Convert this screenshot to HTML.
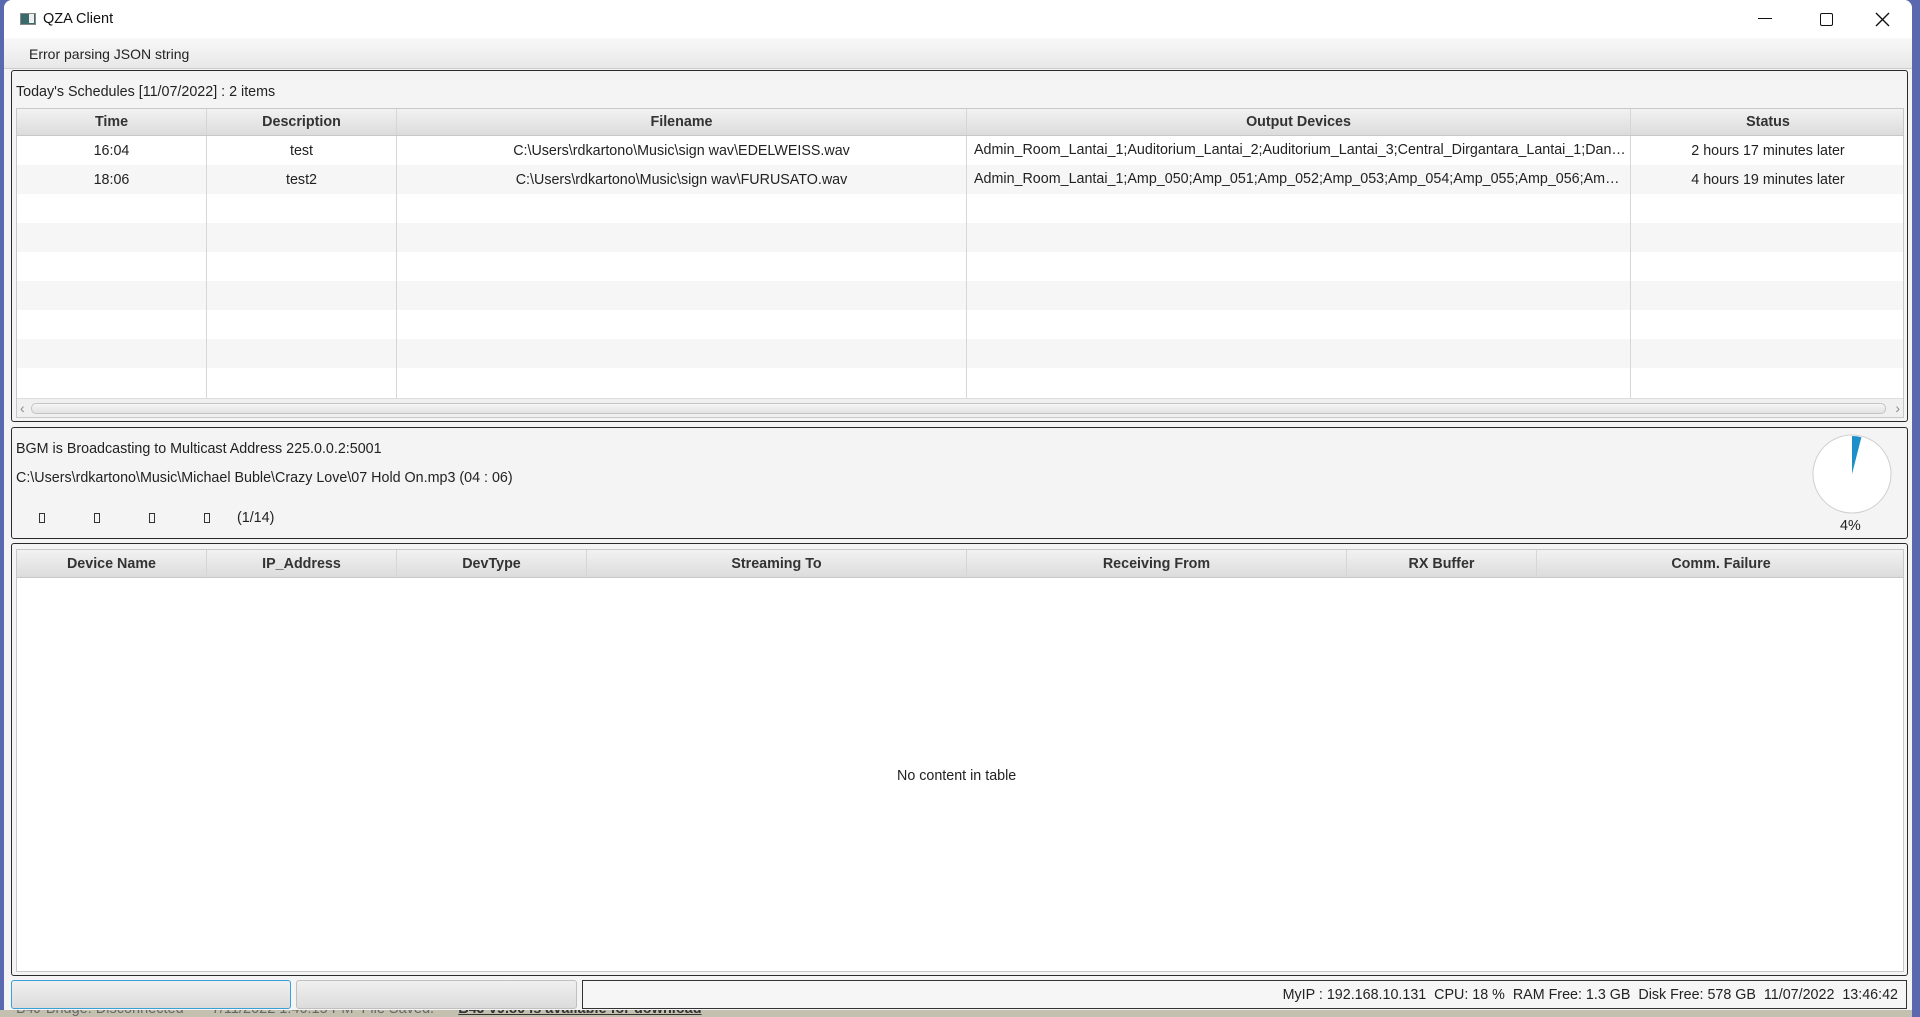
<!DOCTYPE html>
<html><head><meta charset="utf-8"><style>
*{box-sizing:border-box;margin:0;padding:0}
body{width:1920px;height:1017px;overflow:hidden;background:#5a68b0;font-family:"Liberation Sans",sans-serif;font-size:14.3px;color:#222;position:relative}
.abs{position:absolute}
.win{left:4px;top:0;width:1908px;height:1010px;background:#f4f4f4;border-radius:8px 8px 0 0}
.title{left:4px;top:0;width:1908px;height:38px;background:#fff;border-radius:8px 8px 0 0}
.menu{left:4px;top:38px;width:1908px;height:31px;background:linear-gradient(#f8f8f8,#e8e8e8);border-bottom:1px solid #ccc}
.panel{border:1px solid #2a2a2a;border-radius:3px;background:#f4f4f4}
.hdr{background:linear-gradient(#f2f2f2,#dcdcdc);border-bottom:1px solid #c8c8c8;font-weight:bold;color:#333}
.cell{position:absolute;top:0;height:100%;display:flex;align-items:center;justify-content:center;border-right:1px solid #d6d6d6;white-space:nowrap;overflow:hidden}
.ell{display:block;line-height:29px;text-overflow:ellipsis;padding-left:7px;padding-right:4px}
.row{position:absolute;left:0;width:100%;height:29px}
.t{position:absolute;white-space:nowrap}
</style></head><body>
<div class="abs win"></div>
<div class="abs title">
 <div class="abs" style="left:16px;top:13px;width:16px;height:12px;background:#3a6a6a;border:1px solid #888"></div>
 <div class="abs" style="left:25px;top:14px;width:5px;height:9px;background:#eee"></div>
 <div class="t" style="left:39px;top:11px;font-size:14.5px;color:#111">QZA Client</div>
 <div class="abs" style="left:1754px;top:18px;width:14px;height:1px;background:#111"></div>
 <div class="abs" style="left:1816px;top:13px;width:13px;height:13px;border:1.5px solid #111;border-radius:2px"></div>
 <svg class="abs" style="left:1871px;top:12px" width="15" height="15"><path d="M1 1L14 14M14 1L1 14" stroke="#111" stroke-width="1.4"/></svg>
</div>
<div class="abs menu"><div class="t" style="left:25px;top:8px;font-size:14px">Error parsing JSON string</div></div>

<div class="abs panel" style="left:11px;top:70px;width:1897px;height:352px">
 <div class="t" style="left:4px;top:13px">Today's Schedules [11/07/2022] : 2 items</div>
 <div class="abs" style="left:4px;top:37px;width:1888px;height:310px;background:#fff;border:1px solid #c8c8c8">
  <div class="row hdr" style="top:0;height:27px">
   <div class="cell" style="left:0;width:190px">Time</div><div class="cell" style="left:190px;width:190px">Description</div><div class="cell" style="left:380px;width:570px">Filename</div><div class="cell" style="left:950px;width:664px">Output Devices</div><div class="cell" style="left:1614px;width:274px;border:0">Status</div>
  </div>
  <div class="row" style="top:27px;background:#fff"><div class="cell" style="left:0;width:190px">16:04</div><div class="cell" style="left:190px;width:190px">test</div><div class="cell" style="left:380px;width:570px">C:\Users\rdkartono\Music\sign wav\EDELWEISS.wav</div><div class="cell ell" style="left:950px;width:664px">Admin_Room_Lantai_1;Auditorium_Lantai_2;Auditorium_Lantai_3;Central_Dirgantara_Lantai_1;Dan_Lantai_2;Amp_001</div><div class="cell" style="left:1614px;width:274px;border:0">2 hours 17 minutes later</div></div>
  <div class="row" style="top:56px;background:#f6f6f6"><div class="cell" style="left:0;width:190px">18:06</div><div class="cell" style="left:190px;width:190px">test2</div><div class="cell" style="left:380px;width:570px">C:\Users\rdkartono\Music\sign wav\FURUSATO.wav</div><div class="cell ell" style="left:950px;width:664px">Admin_Room_Lantai_1;Amp_050;Amp_051;Amp_052;Amp_053;Amp_054;Amp_055;Amp_056;Amp_057;Amp_058</div><div class="cell" style="left:1614px;width:274px;border:0">4 hours 19 minutes later</div></div>
  <div class="row" style="top:85px"><div class="cell" style="left:0;width:190px"></div><div class="cell" style="left:190px;width:190px"></div><div class="cell" style="left:380px;width:570px"></div><div class="cell" style="left:950px;width:664px"></div></div>
  <div class="row" style="top:114px;background:#f6f6f6"><div class="cell" style="left:0;width:190px"></div><div class="cell" style="left:190px;width:190px"></div><div class="cell" style="left:380px;width:570px"></div><div class="cell" style="left:950px;width:664px"></div></div>
  <div class="row" style="top:143px"><div class="cell" style="left:0;width:190px"></div><div class="cell" style="left:190px;width:190px"></div><div class="cell" style="left:380px;width:570px"></div><div class="cell" style="left:950px;width:664px"></div></div>
  <div class="row" style="top:172px;background:#f6f6f6"><div class="cell" style="left:0;width:190px"></div><div class="cell" style="left:190px;width:190px"></div><div class="cell" style="left:380px;width:570px"></div><div class="cell" style="left:950px;width:664px"></div></div>
  <div class="row" style="top:201px"><div class="cell" style="left:0;width:190px"></div><div class="cell" style="left:190px;width:190px"></div><div class="cell" style="left:380px;width:570px"></div><div class="cell" style="left:950px;width:664px"></div></div>
  <div class="row" style="top:230px;background:#f6f6f6"><div class="cell" style="left:0;width:190px"></div><div class="cell" style="left:190px;width:190px"></div><div class="cell" style="left:380px;width:570px"></div><div class="cell" style="left:950px;width:664px"></div></div>
  <div class="row" style="top:259px;height:30px"><div class="cell" style="left:0;width:190px"></div><div class="cell" style="left:190px;width:190px"></div><div class="cell" style="left:380px;width:570px"></div><div class="cell" style="left:950px;width:664px"></div></div>
  <div class="abs" style="left:0;top:289px;width:100%;height:19px;background:#f0f0f0;border-top:1px solid #ddd">
   <div class="t" style="left:3px;top:1px;font-size:14px;color:#888">&lsaquo;</div>
   <div class="abs" style="left:14px;top:4px;width:1855px;height:11px;background:linear-gradient(#f6f6f6,#e2e2e2);border:1px solid #c4c4c4;border-radius:5px"></div>
   <div class="t" style="right:3px;top:1px;font-size:14px;color:#888">&rsaquo;</div>
  </div>
 </div>
</div>

<div class="abs panel" style="left:11px;top:427px;width:1897px;height:112px">
 <div class="t" style="left:4px;top:13px">BGM is Broadcasting to Multicast Address 225.0.0.2:5001</div>
 <div class="t" style="left:4px;top:42px">C:\Users\rdkartono\Music\Michael Buble\Crazy Love\07 Hold On.mp3 (04 : 06)</div>
 <div class="abs" style="left:27px;top:85px;width:6px;height:10px;border:1px solid #333"></div>
 <div class="abs" style="left:82px;top:85px;width:6px;height:10px;border:1px solid #333"></div>
 <div class="abs" style="left:137px;top:85px;width:6px;height:10px;border:1px solid #333"></div>
 <div class="abs" style="left:192px;top:85px;width:6px;height:10px;border:1px solid #333"></div>
 <div class="t" style="left:225px;top:82px">(1/14)</div>
 <svg class="abs" style="left:1800px;top:6px" width="82" height="82"><circle cx="40" cy="40" r="39" fill="#fff" stroke="#d0d0d0"/><path d="M40 40L40 2A38 38 0 0 1 49.4 3.2Z" fill="#1a8fc8"/></svg>
 <div class="t" style="left:1828px;top:90px">4%</div>
</div>

<div class="abs panel" style="left:11px;top:543px;width:1897px;height:433px">
 <div class="abs" style="left:4px;top:5px;width:1888px;height:423px;background:#fff;border:1px solid #c8c8c8">
  <div class="row hdr" style="top:0;height:28px">
   <div class="cell" style="left:0;width:190px">Device Name</div><div class="cell" style="left:190px;width:190px">IP_Address</div><div class="cell" style="left:380px;width:190px">DevType</div><div class="cell" style="left:570px;width:380px">Streaming To</div><div class="cell" style="left:950px;width:380px">Receiving From</div><div class="cell" style="left:1330px;width:190px">RX Buffer</div><div class="cell" style="left:1520px;width:368px;border:0">Comm. Failure</div>
  </div>
  <div class="t" style="left:880px;top:218px">No content in table</div>
 </div>
</div>

<div class="abs" style="left:11px;top:980px;width:280px;height:29px;border:1.5px solid #3aa0d8;border-radius:3px;background:linear-gradient(#f0f0f0,#dcdcdc)"></div>
<div class="abs" style="left:296px;top:980px;width:281px;height:29px;border:1px solid #c0c0c0;border-radius:3px;background:linear-gradient(#f0f0f0,#dcdcdc)"></div>
<div class="abs" style="left:582px;top:980px;width:1325px;height:29px;border:1px solid #333;background:#f6f6f6">
 <div class="t" style="right:8px;top:6px">MyIP : 192.168.10.131&nbsp; CPU: 18 %&nbsp; RAM Free: 1.3 GB&nbsp; Disk Free: 578 GB&nbsp; 11/07/2022&nbsp; 13:46:42</div>
</div>
<div class="abs" style="left:0;top:1010px;width:1912px;height:7px;background:#c4c0b0;overflow:hidden">
 <div class="t" style="left:16px;top:-9px;color:#666;font-size:14.5px">B4J-Bridge: Disconnected &nbsp;&nbsp;&nbsp;&nbsp;&nbsp; 7/11/2022 1:40:15 PM &nbsp;File Saved. &nbsp;&nbsp;&nbsp;&nbsp; <b style="color:#333;text-decoration:underline">B4J v9.80 is available for download</b></div>
</div>
</body></html>
